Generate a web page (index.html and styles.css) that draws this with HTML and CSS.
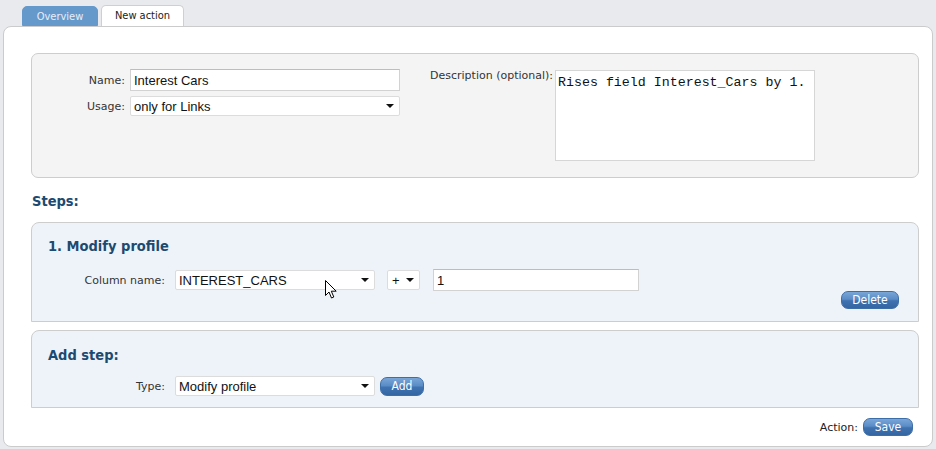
FILE: index.html
```html
<!DOCTYPE html>
<html>
<head>
<meta charset="utf-8">
<link rel="stylesheet" href="styles.css">
</head>
<body>
<div class="tabs">
  <div class="tab tab-inactive">Overview</div>
  <div class="tab tab-active">New action</div>
</div>
<div class="panel">
  <div class="props">
    <div class="props-grid">
      <label class="lbl">Name:</label>
      <input class="field name-field" type="text" value="Interest Cars">
      <label class="lbl">Usage:</label>
      <span class="sel usage-sel"><select><option>only for Links</option></select></span>
    </div>
    <div class="desc">
      <label class="lbl">Description (optional):</label>
      <textarea class="desc-area">Rises field Interest_Cars by 1.</textarea>
    </div>
  </div>

  <h2 class="section-title">Steps:</h2>

  <div class="step-box step-first">
    <h3 class="step-title">1. Modify profile</h3>
    <div class="step-row">
      <label class="lbl step-lbl">Column name:</label>
      <span class="sel col-sel"><select><option>INTEREST_CARS</option></select></span>
      <span class="sel op-sel"><select><option>+</option></select></span>
      <input class="field val-field" type="text" value="1">
    </div>
    <div class="step-actions">
      <button class="btn btn-delete">Delete</button>
    </div>
  </div>

  <div class="step-box step-add">
    <h3 class="step-title">Add step:</h3>
    <div class="step-row add-row">
      <label class="lbl step-lbl">Type:</label>
      <span class="sel type-sel"><select><option>Modify profile</option></select></span>
      <button class="btn btn-add">Add</button>
    </div>
  </div>

  <div class="action-row">
    <span class="lbl">Action:</span>
    <button class="btn btn-save">Save</button>
  </div>

  <svg class="cursor" width="13" height="20" viewBox="0 0 13 20">
    <path d="M0.5 0.5 L0.5 15.5 L4 12 L6.5 18 L8.8 17 L6.3 11.2 L11.2 11.2 Z" fill="#fff" stroke="#000" stroke-width="1" stroke-linejoin="miter"/>
  </svg>
</div>
</body>
</html>
```

FILE: styles.css
```css
* { box-sizing: border-box; }

html, body {
  margin: 0;
  padding: 0;
}

body {
  background: #e9eaee;
  font-family: "DejaVu Sans", sans-serif;
  font-size: 11px;
  color: #222;
  width: 936px;
  height: 449px;
  overflow: hidden;
}

.tabs {
  display: flex;
  align-items: flex-end;
  gap: 3px;
  padding: 5px 0 0 22px;
  height: 26px;
}

.tab {
  height: 21px;
  line-height: 20px;
  text-align: center;
  border-radius: 5px 5px 0 0;
  font-family: "DejaVu Sans Condensed", "DejaVu Sans", sans-serif;
  font-size: 11px;
}

.tab-inactive {
  width: 76px;
  height: 20px;
  background: #6599cb;
  color: #e6eef8;
  border: 1px solid #6599cb;
}

.tab-active {
  width: 83px;
  height: 22px;
  background: #fff;
  color: #222;
  border: 1px solid #cfcfcf;
  border-bottom: none;
  position: relative;
  top: 1px;
}

.panel {
  position: relative;
  margin: 0 3px;
  height: 421px;
  background: #fff;
  border: 1px solid #cbcbcb;
  border-radius: 8px;
  padding: 26px 13px 0 27px;
}

.props {
  display: flex;
  align-items: flex-start;
  height: 125px;
  background: #f4f4f4;
  border: 1px solid #cdcdcd;
  border-radius: 7px;
  padding-top: 15px;
}

.props-grid {
  display: grid;
  grid-template-columns: 93px 270px;
  column-gap: 5px;
  row-gap: 5px;
  align-items: center;
}

.lbl {
  color: #333;
  font-family: "DejaVu Sans", sans-serif;
  font-size: 11px;
  text-align: right;
}

.field {
  font-family: "Liberation Sans", Arial, sans-serif;
  font-size: 13px;
  color: #111;
  background: #fff;
  border: 1px solid #d2d2d2;
  border-top-color: #bdbdbd;
  padding: 0 3px;
  outline: none;
}

.name-field {
  width: 270px;
  height: 22px;
}

.sel {
  position: relative;
  display: inline-block;
}

.sel select {
  appearance: none;
  -webkit-appearance: none;
  width: 100%;
  height: 100%;
  font-family: "Liberation Sans", Arial, sans-serif;
  font-size: 13px;
  color: #111;
  background: #fff;
  border: 1px solid #dcdcdc;
  border-radius: 2px;
  padding: 0 3px;
  outline: none;
}

.sel::after {
  content: "";
  position: absolute;
  right: 6px;
  top: 50%;
  margin-top: -2px;
  border-left: 4px solid transparent;
  border-right: 4px solid transparent;
  border-top: 4px solid #111;
  pointer-events: none;
}

.usage-sel {
  width: 270px;
  height: 20px;
}

.desc {
  display: flex;
  align-items: flex-start;
  gap: 2px;
  margin-left: 30px;
  padding-top: 1px;
}

.desc .lbl {
  line-height: 13px;
  margin-top: -1px;
}

.desc-area {
  width: 260px;
  height: 91px;
  resize: none;
  font-family: "Liberation Mono", "Courier New", monospace;
  font-size: 13.3px;
  color: #111;
  background: #fff;
  border: 1px solid #d6d6d6;
  padding: 4px 2px;
  outline: none;
}

.section-title {
  margin: 0;
  padding: 14px 0 12px 1px;
  line-height: 18px;
  font-family: "DejaVu Sans Condensed", "DejaVu Sans", sans-serif;
  font-size: 14.5px;
  font-weight: bold;
  color: #1d4a70;
}

.step-box {
  background: #eef3fa;
  border: 1px solid #cdcdcd;
  border-radius: 8px 8px 0 0;
  padding-left: 16px;
}

.step-first {
  height: 100px;
  padding-top: 14px;
  padding-right: 19px;
}

.step-add {
  margin-top: 8px;
  height: 78px;
  padding-top: 15px;
}

.step-title {
  margin: 0;
  line-height: 18px;
  font-family: "DejaVu Sans Condensed", "DejaVu Sans", sans-serif;
  font-size: 14.5px;
  font-weight: bold;
  color: #1d4a70;
}

.step-row {
  display: flex;
  align-items: center;
  margin-top: 14px;
  height: 22px;
}

.add-row {
  margin-top: 12px;
  height: 20px;
}

.step-lbl {
  width: 117px;
  margin-right: 10px;
}

.col-sel, .type-sel {
  width: 200px;
  height: 20px;
}

.op-sel {
  width: 33px;
  height: 20px;
  margin-left: 12px;
}

.op-sel select {
  padding-left: 4px;
}

.val-field {
  width: 206px;
  height: 22px;
  margin-left: 13px;
}

.step-actions {
  display: flex;
  justify-content: flex-end;
}

.btn {
  font-family: "DejaVu Sans Condensed", "DejaVu Sans", sans-serif;
  font-size: 12px;
  color: #fff;
  height: 18px;
  line-height: 16px;
  padding: 0;
  border: 1px solid #3e6ea8;
  border-radius: 7px;
  background: linear-gradient(#7aa6d8 0%, #5a8cc6 45%, #3f72b0 55%, #3566a4 100%);
  cursor: pointer;
}

.btn-delete { width: 58px; }

.btn-add {
  width: 44px;
  margin-left: 5px;
  height: 19px;
}

.btn-save { width: 50px; }

.action-row {
  display: flex;
  justify-content: flex-end;
  align-items: center;
  gap: 5px;
  margin-top: 10px;
  margin-right: 6px;
}

.action-row .lbl {
  color: #222;
}

.cursor {
  position: absolute;
  left: 321px;
  top: 253px;
}
```
